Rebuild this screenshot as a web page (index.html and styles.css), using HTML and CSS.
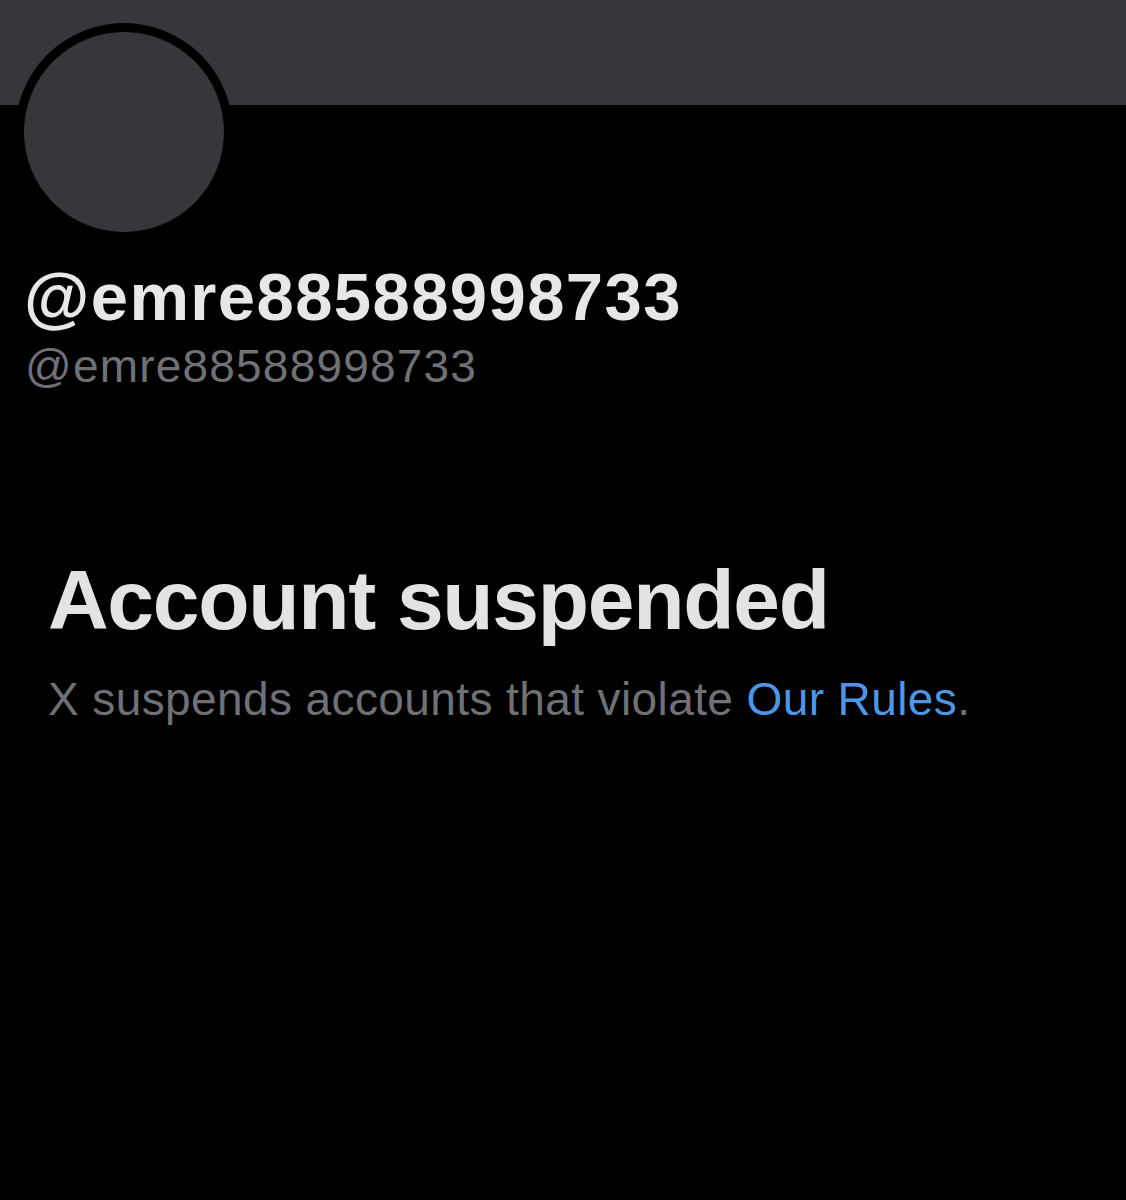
FILE: index.html
```html
<!DOCTYPE html>
<html lang="en">
<head>
<meta charset="utf-8">
<title>Account suspended</title>
<link rel="stylesheet" href="styles.css">
</head>
<body>
<div class="profile">
  <div class="banner"></div>
  <div class="avatar"></div>
  <h1 class="name">@emre88588998733</h1>
  <div class="handle">@emre88588998733</div>
  <section class="notice">
    <h2 class="notice-title">Account suspended</h2>
    <p class="notice-text">X suspends accounts that violate <a class="rules-link" href="#">Our Rules</a>.</p>
  </section>
</div>
</body>
</html>
```

FILE: styles.css
```css
html, body {
  margin: 0;
  padding: 0;
  background: #000;
}
body {
  font-family: "Liberation Sans", Arial, sans-serif;
  width: 1126px;
  height: 1200px;
  overflow: hidden;
}
.profile {
  display: flex;
  flex-direction: column;
}
.banner {
  height: 105px;
  background: #36373b;
}
.avatar {
  width: 200px;
  height: 200px;
  border: 9px solid #000;
  border-radius: 50%;
  background: #36373b;
  margin: -82px 0 0 15px;
}
.name {
  margin: 22px 0 0 24px;
  font-size: 67px;
  line-height: 1;
  font-weight: 700;
  letter-spacing: 1.4px;
  color: #e7e7e8;
}
.handle {
  margin: 13px 0 0 25px;
  font-size: 46px;
  line-height: 1;
  letter-spacing: 1.2px;
  color: #6f7175;
}
.notice {
  margin: 169px 0 0 48px;
}
.notice-title {
  margin: 0;
  font-size: 84px;
  line-height: 1;
  font-weight: 700;
  letter-spacing: -1.3px;
  color: #e3e3e4;
}
.notice-text {
  margin: 34px 0 0 0;
  font-size: 46px;
  line-height: 1;
  letter-spacing: 0.4px;
  color: #6f7175;
}
.rules-link {
  color: #4d97e6;
  text-decoration: none;
}
```
